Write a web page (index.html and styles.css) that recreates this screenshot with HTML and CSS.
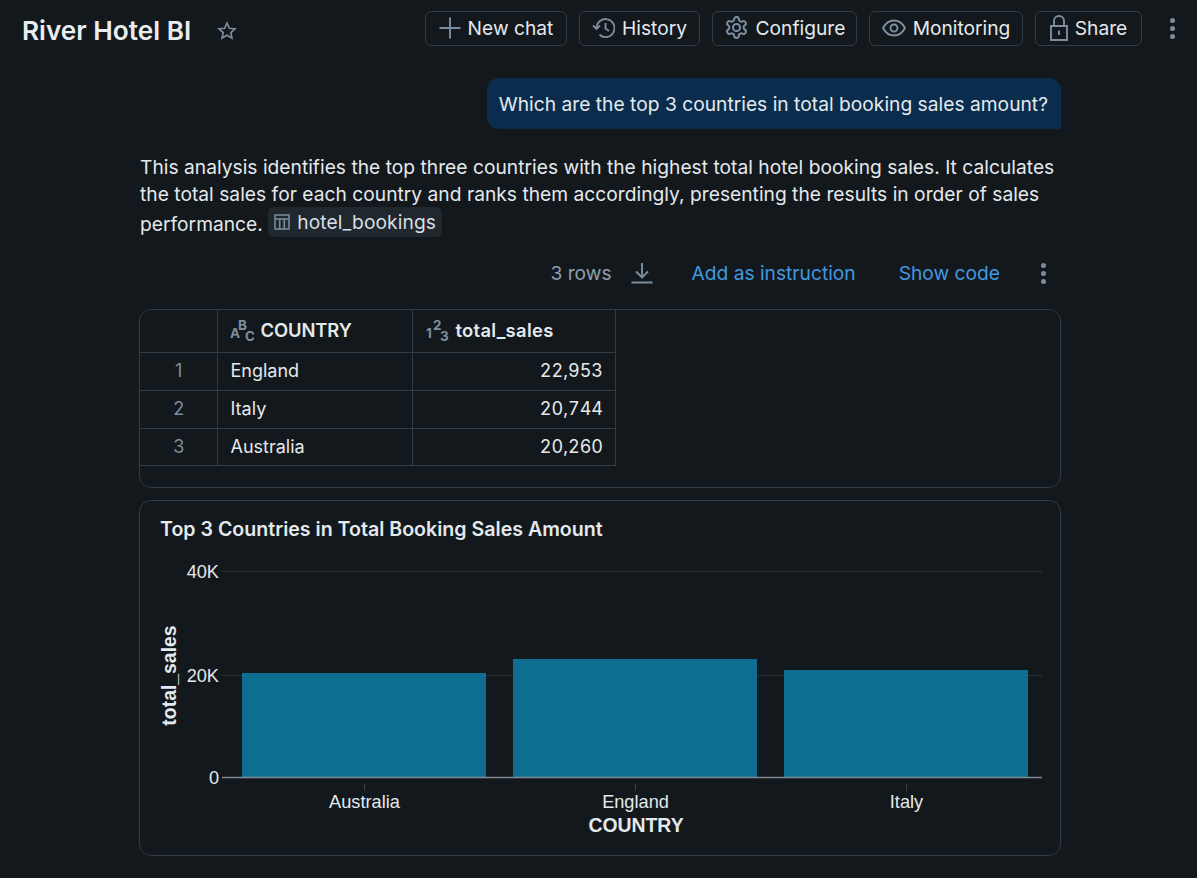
FILE: index.html
```html
<!DOCTYPE html>
<html lang="en">

<head>
    <meta charset="UTF-8">
    <meta name="viewport" content="width=device-width, initial-scale=1.0">
    <title>River Hotel BI</title>
    <link rel="stylesheet" href="styles.css">
</head>

<body>
    <header class="topbar">
        <div class="title-wrap">
            <h1 class="title">River Hotel BI</h1>
            <svg class="star" width="20" height="20" viewBox="0 0 18 18"><path d="M9 1.800l2.100 4.700 5.100.5-3.800 3.400 1.100 5-4.500-2.600-4.500 2.600 1.100-5L1.800 7l5.100-.5z" /></svg>
        </div>
        <nav class="top-actions">
            <button class="btn btn-new">
                <svg class="ico" width="22" height="22" viewBox="0 0 22 22"><path d="M11 .5v21M.5 11h21" /></svg>New chat
            </button>
            <button class="btn btn-history">
                <svg class="ico" width="23" height="22" viewBox="0 0 23 22"><path d="M1 8.500l3.500 3.500L8 8.500" /><path d="M4.500 11a9 9 0 1 1 3 6.800" /><path d="M13.500 6v5.500l3.500 2.500" /></svg>History
            </button>
            <button class="btn btn-config">
                <svg class="ico" width="25" height="25" viewBox="0 0 24 24"><path d="M12.220 2h-.44a2 2 0 0 0-2 2v.18a2 2 0 0 1-1 1.730l-.43.25a2 2 0 0 1-2 0l-.15-.08a2 2 0 0 0-2.730.73l-.22.38a2 2 0 0 0 .73 2.730l.15.1a2 2 0 0 1 1 1.720v.51a2 2 0 0 1-1 1.740l-.15.09a2 2 0 0 0-.73 2.730l.22.38a2 2 0 0 0 2.730.73l.15-.08a2 2 0 0 1 2 0l.43.25a2 2 0 0 1 1 1.730V20a2 2 0 0 0 2 2h.44a2 2 0 0 0 2-2v-.18a2 2 0 0 1 1-1.730l.43-.25a2 2 0 0 1 2 0l.15.08a2 2 0 0 0 2.730-.73l.22-.39a2 2 0 0 0-.73-2.730l-.15-.08a2 2 0 0 1-1-1.740v-.5a2 2 0 0 1 1-1.740l.15-.09a2 2 0 0 0 .73-2.730l-.22-.38a2 2 0 0 0-2.730-.73l-.15.08a2 2 0 0 1-2 0l-.43-.25a2 2 0 0 1-1-1.730V4a2 2 0 0 0-2-2z" /><circle cx="12" cy="12" r="3.400" /></svg>Configure
            </button>
            <button class="btn btn-monitor">
                <svg class="ico" width="24" height="18" viewBox="0 0 24 18"><path d="M1 9c2.600-5 6.500-7.500 11-7.500S20.400 4 23 9c-2.600 5-6.500 7.500-11 7.500S3.600 14 1 9z" /><circle cx="12" cy="9" r="3.500" /></svg>Monitoring
            </button>
            <button class="btn btn-share">
                <svg class="ico" width="18" height="26" viewBox="0 0 18 26"><path d="M1 11h16v14H1zM4 11V6a5 5 0 0 1 10 0v5M9 15.500v4.500" /></svg>Share
            </button>
            <span class="kebab"><i></i><i></i><i></i></span>
        </nav>
    </header>

    <main class="chat">
        <div class="bubble-row">
            <div class="bubble">Which are the top 3 countries in total booking sales amount?</div>
        </div>

        <p class="answer">This analysis identifies the top three countries with the highest total hotel booking sales. It calculates the total sales for each country and ranks them accordingly, presenting the results in order of sales performance.
            <span class="chip"><svg class="ico-small" width="16" height="16" viewBox="0 0 16 16"><path d="M1 1h14v14H1zM1 5h14M5.700 5v10M10.300 5v10" /></svg>hotel_bookings</span>
        </p>

        <div class="result-bar">
            <span class="rows">3 rows</span>
            <svg class="ico" width="22" height="22" viewBox="0 0 22 22"><path d="M11 1v14M5 9.500l6 6 6-6M0.500 20.500h21" /></svg>
            <a class="link" href="#">Add as instruction</a>
            <a class="link" href="#">Show code</a>
            <span class="kebab small"><i></i><i></i><i></i></span>
        </div>

        <section class="card table-card">
            <table class="data">
                <thead>
                    <tr>
                        <th class="col-num"></th>
                        <th class="col-country"><svg class="type-tag" width="24" height="28" viewBox="0 0 24 28"><text x="0" y="21">A</text><text x="8" y="13">B</text><text x="15" y="24">C</text></svg>COUNTRY</th>
                        <th class="col-sales"><svg class="type-tag" width="24" height="28" viewBox="0 0 24 28"><text x="1" y="21">1</text><text x="8" y="13">2</text><text x="15" y="24">3</text></svg>total_sales</th>
                    </tr>
                </thead>
                <tbody>
                    <tr><td class="num">1</td><td>England</td><td class="val">22,953</td></tr>
                    <tr><td class="num">2</td><td>Italy</td><td class="val">20,744</td></tr>
                    <tr class="last-row"><td class="num">3</td><td>Australia</td><td class="val">20,260</td></tr>
                </tbody>
            </table>
        </section>

        <section class="card chart-card">
            <h2 class="chart-title">Top 3 Countries in Total Booking Sales Amount</h2>
            <svg class="chart" width="921" height="300" viewBox="0 0 921 300">
                <g class="grid">
                    <line x1="82" x2="902" y1="31.500" y2="31.500" />
                    <line x1="82" x2="902" y1="135.500" y2="135.500" />
                </g>
                <rect class="bar" x="102" y="133" width="244" height="104" />
                <rect class="bar" x="373" y="119" width="244" height="118" />
                <rect class="bar" x="644" y="130" width="244" height="107" />
                <line class="axis" x1="82" x2="902" y1="237.500" y2="237.500" />
                <g class="tick">
                    <line x1="224.500" x2="224.500" y1="244" y2="251" />
                    <line x1="495.500" x2="495.500" y1="244" y2="251" />
                    <line x1="766.500" x2="766.500" y1="244" y2="251" />
                </g>
                <g class="ylabels">
                    <text x="79" y="37.500">40K</text>
                    <text x="79" y="141.500">20K</text>
                    <text x="79" y="243.500">0</text>
                </g>
                <g class="xlabels">
                    <text x="224.500" y="268">Australia</text>
                    <text x="495.500" y="268">England</text>
                    <text x="766.500" y="268">Italy</text>
                </g>
                <text class="axis-title" x="496" y="292">COUNTRY</text>
                <text class="axis-title" transform="translate(36 135.500) rotate(-90)">total_sales</text>
            </svg>
        </section>
    </main>
</body>

</html>
```

FILE: styles.css
```css
* {
    box-sizing: border-box;
}

body {
    margin: 0;
    background-color: #13181c;
    color: #e4e9ed;
    font-family: Inter, "Liberation Sans", sans-serif;
    font-size: 19.200px;
}

.topbar {
    display: flex;
    justify-content: space-between;
    align-items: flex-start;
    padding: 11px 14px 0 22px;
    height: 78px;
}

.title-wrap {
    display: flex;
    align-items: center;
    gap: 26px;
    height: 39px;
}

.title {
    margin: 0;
    font-size: 26.200px;
    font-weight: 600;
    color: #e9edf0;
}

.star {
    fill: none;
    stroke: #7b8fa1;
    stroke-width: 1.500;
}

.top-actions {
    display: flex;
    align-items: center;
    gap: 12px;
}

.btn {
    display: flex;
    align-items: center;
    justify-content: center;
    gap: 7px;
    height: 35px;
    padding: 0 0 2px;
    background: transparent;
    border: 1px solid #303b45;
    border-radius: 6px;
    color: #e4e9ed;
    font-family: inherit;
    font-size: 19.200px;
}

.btn-new { width: 142px; }
.btn-history { width: 121px; }
.btn-config { width: 145px; }
.btn-monitor { width: 154px; }
.btn-share { width: 107px; }

.ico {
    fill: none;
    stroke: #7b8fa1;
    stroke-width: 1.900;
}

.kebab {
    display: flex;
    flex-direction: column;
    gap: 3px;
    margin-left: 16px;
    margin-right: 8px;
}

.kebab i {
    display: block;
    width: 5px;
    height: 5px;
    border-radius: 50%;
    background-color: #7b8fa1;
}

.chat {
    width: 921px;
    margin-left: 140px;
}

.bubble-row {
    display: flex;
    justify-content: flex-end;
}

.bubble {
    padding: 13px 13px 12px 12px;
    background-color: #0a2d4e;
    border-radius: 12px 12px 0 12px;
    line-height: 26px;
    letter-spacing: 0.020px;
}

.answer {
    margin: 25px 0 0;
    line-height: 27px;
    letter-spacing: 0.020px;
}

.chip {
    display: inline-flex;
    align-items: center;
    gap: 7px;
    padding: 0 6px;
    height: 30px;
    margin-top: -1px;
    background-color: #20272d;
    border-radius: 6px;
    vertical-align: 1px;
    color: #d8dfe5;
    letter-spacing: 0.100px;
    line-height: 22px;
}

.ico-small {
    fill: none;
    stroke: #7b8fa1;
    stroke-width: 1.500;
}

.result-bar {
    display: flex;
    justify-content: flex-end;
    align-items: center;
    height: 30px;
    margin-top: 20px;
}

.rows {
    color: #8f9fad;
    margin-right: 19px;
}

.link {
    margin-left: 43px;
    color: #4299e0;
    text-decoration: none;
}

.link:first-of-type {
    margin-left: 39px;
}

.kebab.small {
    margin-left: 41px;
    margin-right: 15px;
}

.card {
    margin-left: -1px;
    border: 1px solid #303b45;
    border-radius: 12px;
}

.table-card {
    height: 179px;
    margin-top: 21px;
    overflow: hidden;
}

.data {
    border-collapse: collapse;
    width: 476px;
    table-layout: fixed;
}

.data th,
.data td {
    border: 1px solid #303b45;
    padding: 0 12px 1px 13px;
    height: 38px;
    font-size: 18px;
    text-align: left;
    font-weight: 400;
}

.data th {
    height: 42px;
    padding: 0 12px;
    font-size: 18.400px;
    font-weight: 600;
    border-top: none;
}

.data .last-row td {
    height: 37px;
}

.data th:first-child,
.data td:first-child {
    border-left: none;
}

.col-num { width: 77px; }
.col-country { width: 195px; letter-spacing: -0.100px; }
.col-sales { letter-spacing: 0.300px; }

.data td.num {
    text-align: center;
    color: #7b8fa1;
}

.data td.val {
    text-align: right;
    font-variant-numeric: tabular-nums;
}

.type-tag {
    margin-right: 7px;
    vertical-align: -8px;
}

.type-tag text {
    font-size: 13.500px;
    font-weight: 700;
    fill: #7b8fa1;
}

.chart-card {
    height: 356px;
    margin-top: 12px;
    padding: 17px 0 0;
}

.chart-title {
    margin: 0 0 0 20px;
    font-size: 19.600px;
    line-height: 22px;
    font-weight: 600;
    color: #e4e9ed;
}

.chart {
    display: block;
}

.grid line {
    stroke: #2b3036;
    stroke-width: 1;
}

.bar {
    fill: #0e6e92;
}

.axis {
    stroke: #7d8a95;
    stroke-width: 1.500;
}

.tick line {
    stroke: #3a4249;
}

.ylabels text,
.xlabels text {
    font-family: "Liberation Sans", sans-serif;
    font-size: 18.200px;
    fill: #e4e9ed;
}

.ylabels text {
    text-anchor: end;
}

.xlabels text {
    text-anchor: middle;
}

.axis-title {
    font-family: "Liberation Sans", sans-serif;
    font-size: 19.400px;
    font-weight: 700;
    fill: #e4e9ed;
    text-anchor: middle;
}
```
